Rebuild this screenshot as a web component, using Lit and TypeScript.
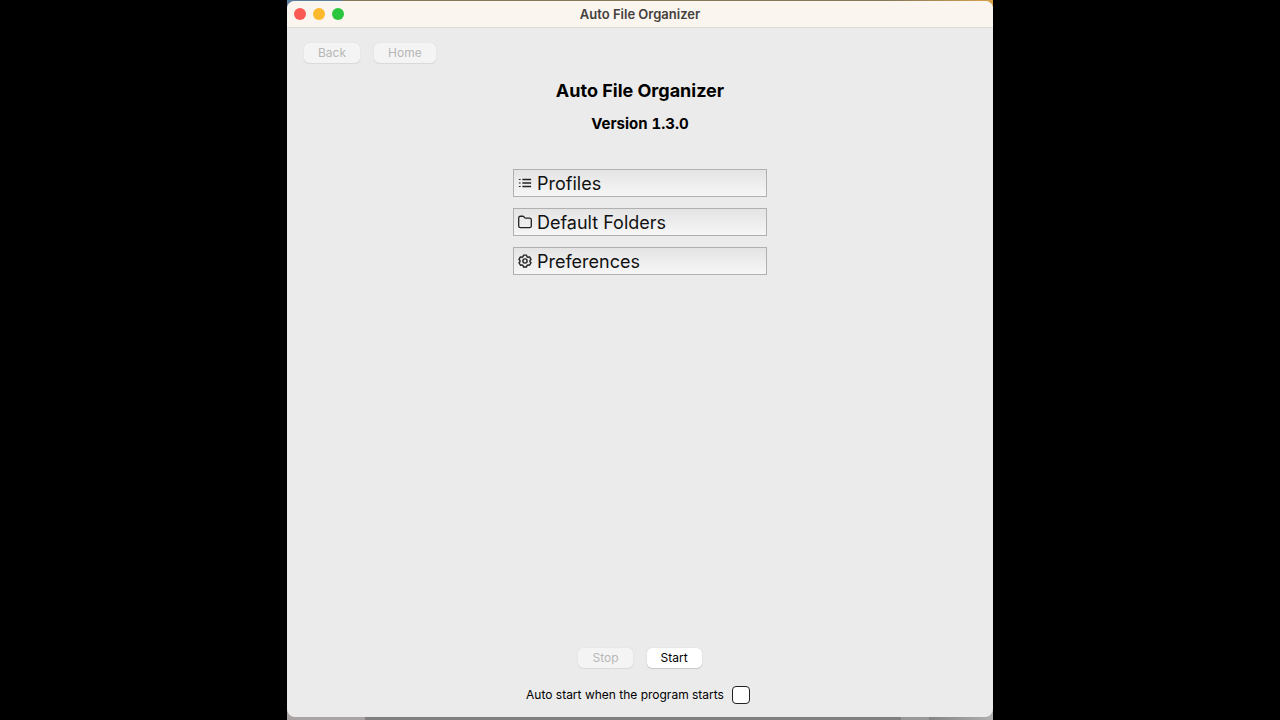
import { LitElement, html, css, svg } from "lit";
import { customElement, property, state } from "lit/decorators.js";

const icons = {
  list: svg`
    <path d="M5 4h10M5 8h10M5 12h10" stroke-width="1.5"/>
    <path d="M1 4h2M1 8h2M1 12h2" stroke-width="1.3"/>`,
  folder: svg`
    <path d="M.8 3.4q0-2 2-2h2.7q.7 0 1.1.5l.9 1.1q.4.5 1.1.5h4.6q2 0 2 2v7q0 2-2 2H2.8q-2 0-2-2z" stroke-width="1.5"/>`,
  gear: svg`
    <path d="M6.3 1.3h3.4l.5 1.7 1.3.75 1.7-.4 1.7 2.9-1.2 1.2v1.3l1.2 1.2-1.7 2.9-1.7-.4-1.3.75-.5 1.7H6.3l-.5-1.7-1.3-.75-1.7.4-1.7-2.9 1.2-1.2v-1.3L1.1 6.25l1.7-2.9 1.7.4 1.3-.75z" stroke-width="1.6"/>
    <circle cx="8" cy="8" r="2.4" stroke-width="1.6"/>`,
};

type IconName = keyof typeof icons;

@customElement("menu-entry")
class MenuEntry extends LitElement {
  @property() label = "";
  @property() icon: IconName = "list";

  static styles = css`
    :host {
      display: block;
    }
    .entry {
      display: flex;
      align-items: center;
      gap: 5px;
      width: 100%;
      height: 28px;
      box-sizing: border-box;
      padding: 0 4px;
      border: 1px solid #b0b0b0;
      border-radius: 0;
      background: linear-gradient(#e4e4e4, #f6f6f6);
      color: #111;
      font: 400 18px/24px Inter, "Liberation Sans", sans-serif;
      text-align: left;
    }
    .label {
      padding-top: 2px;
    }
    .glyph {
      width: 14px;
      height: 14px;
      flex: none;
      fill: none;
      stroke: #222;
      stroke-linejoin: round;
    }
  `;

  render() {
    return html`<button class="entry" type="button">
      <svg class="glyph" viewBox="0 0 16 16" aria-hidden="true">${icons[this.icon]}</svg>
      <span class="label">${this.label}</span>
    </button>`;
  }
}

@customElement("app-root")
class AppRoot extends LitElement {
  @state() running = false;

  static styles = css`
    :host {
      display: block;
      min-height: 100vh;
      background: #000;
      color: #000;
      font: 400 12px/16px Inter, "Liberation Sans", sans-serif;
    }
    .desktop {
      display: flex;
      max-width: 706px;
      min-height: 100vh;
      margin: 0 auto;
      padding: 1px 0 3px;
      box-sizing: border-box;
      background:
        linear-gradient(90deg, #5d7f9c 8%, #85785a 8%, #85785a 85%, #d9a24a) top / 100% 12px no-repeat,
        linear-gradient(90deg, #aaa3a3 11%, #808080 11%, #808080 87%, #989898 87%, #989898 91%, #858585 91%, #b0b0b0) bottom / 100% 12px no-repeat;
    }
    .window {
      display: flex;
      flex: 1;
      flex-direction: column;
      overflow: hidden;
      border-radius: 8px;
      background: #ebebeb;
    }
    .titlebar {
      display: grid;
      grid-template-columns: 1fr auto 1fr;
      align-items: center;
      height: 26px;
      padding: 0 7px;
      border-bottom: 1px solid #dedbd7;
      background: #faf5ee;
    }
    .lights {
      display: flex;
      gap: 7px;
    }
    .light {
      width: 12px;
      height: 12px;
      padding: 0;
      border: 0;
      border-radius: 50%;
    }
    .close {
      background: #fb5b54;
    }
    .minimize {
      background: #fcb92c;
    }
    .zoom {
      background: #28c73f;
    }
    .caption {
      color: #45403c;
      font-size: 13px;
      font-weight: 600;
    }
    .nav,
    .actions {
      display: flex;
      gap: 14px;
    }
    .nav {
      padding: 15px 17px 0;
    }
    .push {
      height: 20px;
      padding: 0 14px;
      border: 0;
      border-radius: 5px;
      background: #fff;
      box-shadow: 0 0 1px #0003, 0 1px 1px #0002;
      color: #000;
      font: inherit;
    }
    .push:disabled {
      background: #f4f4f4;
      box-shadow: 0 0 1px #0002, 0 1px 1px #0001;
      color: #b7b7b7;
    }
    .heading {
      padding-top: 16px;
      text-align: center;
    }
    .name {
      margin: 0;
      font-size: 18px;
      font-weight: 700;
      line-height: 24px;
    }
    .version {
      margin: 11px 0 0;
      font-size: 15px;
      font-variant-numeric: tabular-nums;
      font-weight: 700;
      line-height: 20px;
    }
    .menu {
      display: flex;
      flex-direction: column;
      align-self: center;
      gap: 11px;
      width: 254px;
      margin-top: 35px;
    }
    .footer {
      display: flex;
      flex-direction: column;
      align-items: center;
      gap: 18px;
      margin-top: auto;
      padding-bottom: 13px;
    }
    .autostart {
      display: flex;
      align-items: center;
      gap: 8px;
      padding-right: 4px;
    }
    .box {
      appearance: none;
      width: 18px;
      height: 18px;
      margin: 0;
      box-sizing: border-box;
      border: 1px solid #222;
      border-radius: 4px;
      background: #fff;
    }
    .box:checked {
      background: #222;
      box-shadow: inset 0 0 0 3px #fff;
    }
  `;

  render() {
    return html`
      <div class="desktop">
        <main class="window">
          <header class="titlebar">
            <div class="lights">
              <button class="light close" type="button" aria-label="Close"></button>
              <button class="light minimize" type="button" aria-label="Minimize"></button>
              <button class="light zoom" type="button" aria-label="Zoom"></button>
            </div>
            <span class="caption">Auto File Organizer</span>
          </header>
          <nav class="nav">
            <button class="push" type="button" disabled>Back</button>
            <button class="push" type="button" disabled>Home</button>
          </nav>
          <div class="heading">
            <h1 class="name">Auto File Organizer</h1>
            <p class="version">Version 1.3.0</p>
          </div>
          <div class="menu">
            <menu-entry icon="list" label="Profiles"></menu-entry>
            <menu-entry icon="folder" label="Default Folders"></menu-entry>
            <menu-entry icon="gear" label="Preferences"></menu-entry>
          </div>
          <footer class="footer">
            <div class="actions">
              <button class="push" type="button" ?disabled=${!this.running} @click=${() => (this.running = false)}>Stop</button>
              <button class="push" type="button" ?disabled=${this.running} @click=${() => (this.running = true)}>Start</button>
            </div>
            <label class="autostart">
              <span>Auto start when the program starts</span>
              <input class="box" type="checkbox" />
            </label>
          </footer>
        </main>
      </div>
    `;
  }
}
